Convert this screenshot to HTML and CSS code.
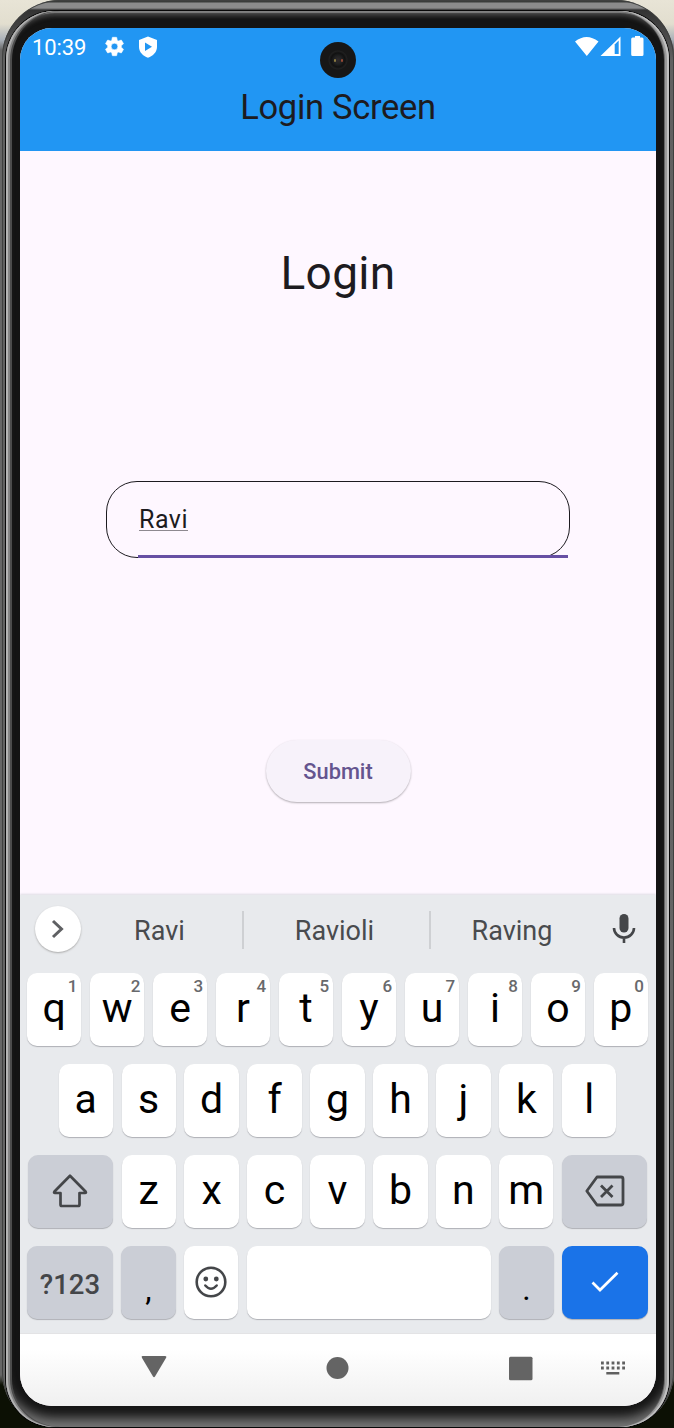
FILE: index.html
```html
<!DOCTYPE html>
<html lang="en">
<head>
<meta charset="utf-8">
<title>Login Screen</title>
<link rel="stylesheet" href="styles.css">
</head>
<body>
<div class="phone">
<div class="bezel">
<span class="camera"><i></i><i></i></span>
<main class="screen">
  <header class="appbar">
    <div class="status">
      <span class="time">10:39</span>
      <svg class="gear" width="23" height="23" viewBox="0 0 24 24"><path fill="#fff" stroke="#fff" stroke-width=".6" d="M19.14 12.94c.04-.3.06-.61.06-.94s-.02-.64-.07-.94l2.03-1.58a.49.49 0 0 0 .12-.61l-1.92-3.32a.49.49 0 0 0-.59-.22l-2.39.96a7 7 0 0 0-1.62-.94l-.36-2.54a.48.48 0 0 0-.48-.41h-3.84a.48.48 0 0 0-.47.41l-.36 2.54c-.59.24-1.13.57-1.62.94l-2.39-.96a.48.48 0 0 0-.59.22L2.74 8.87a.48.48 0 0 0 .12.61l2.03 1.58c-.05.3-.09.63-.09.94s.02.64.07.94l-2.03 1.58a.49.49 0 0 0-.12.61l1.92 3.32c.12.22.37.29.59.22l2.39-.96c.5.38 1.03.7 1.62.94l.36 2.54c.05.24.24.41.48.41h3.84c.24 0 .44-.17.47-.41l.36-2.54a7 7 0 0 0 1.62-.94l2.39.96c.22.08.47 0 .59-.22l1.92-3.32a.48.48 0 0 0-.12-.61zM12 15.5a3.5 3.5 0 1 1 0-7 3.5 3.5 0 0 1 0 7z"/></svg>
      <svg class="shield" width="18" height="22" viewBox="0 0 18 22"><path fill="#fff" fill-rule="evenodd" d="M9 .5 18 4v7c0 5-4 9-9 10.800C4 20 0 16 0 11V4zM6 6.500v8.500L13 10.750z"/></svg>
      <span class="grow"></span>
      <svg class="signals" width="70" height="22" viewBox="0 0 70 22"><path fill="#fff" d="M0 5.500Q11.500-3.500 23.500 5.500L11.800 20ZM25.500 20 45.500 0.500V20Z"/><path fill="#2196f3" d="M39.700 8.500 43.700 4.500V18H39.700Z"/><path fill="#fff" d="M60 0h5v1.500h2a1.500 1.500 0 0 1 1.500 1.500v15.500a1.500 1.500 0 0 1-1.500 1.500H57.700a1.500 1.500 0 0 1-1.500-1.500V3a1.500 1.500 0 0 1 1.500-1.500H60z"/></svg>
    </div>
    <h1 class="title">Login Screen</h1>
  </header>
  <section class="content">
    <h2 class="heading">Login</h2>
    <div class="field"><span class="value">Ravi</span></div>
    <button class="submit">Submit</button>
  </section>
  <section class="keyboard">
    <div class="suggest">
      <span class="expand"><svg width="46" height="46" viewBox="0 0 46 46"><path d="m18 15 8.500 8-8.500 8" fill="none" stroke="#5f6063" stroke-width="3"/></svg></span>
      <span class="word first">Ravi</span>
      <span class="word second">Ravioli</span>
      <span class="word third">Raving</span>
      <svg class="mic" width="24" height="32" viewBox="0 0 24 32"><rect x="7.500" y="1" width="9" height="18.500" rx="4.500" fill="#444649"/><path d="M2 15a9.900 9.500 0 0 0 20 0M12 24.500v5.500" fill="none" stroke="#444649" stroke-width="2.600"/></svg>
    </div>
    <div class="keys">
      <div class="row">
        <span class="key">q<sup>1</sup></span><span class="key">w<sup>2</sup></span><span class="key">e<sup>3</sup></span><span class="key">r<sup>4</sup></span><span class="key">t<sup>5</sup></span><span class="key">y<sup>6</sup></span><span class="key">u<sup>7</sup></span><span class="key">i<sup>8</sup></span><span class="key">o<sup>9</sup></span><span class="key">p<sup>0</sup></span>
      </div>
      <div class="row">
        <span class="key">a</span><span class="key">s</span><span class="key">d</span><span class="key">f</span><span class="key">g</span><span class="key">h</span><span class="key">j</span><span class="key">k</span><span class="key">l</span>
      </div>
      <div class="row">
        <span class="key wide gray"><svg width="36" height="34" viewBox="0 0 36 34"><path d="M18 1.800 33.500 17.500Q34.500 19 33 19H27.500V30.500Q27.500 32 26 32H10Q8.500 32 8.500 30.500V19H3Q1.500 19 2.500 17.500Z" fill="none" stroke="#444649" stroke-width="2.700" stroke-linejoin="round"/></svg></span>
        <span class="key">z</span><span class="key">x</span><span class="key">c</span><span class="key">v</span><span class="key">b</span><span class="key">n</span><span class="key">m</span>
        <span class="key wide gray"><svg width="40" height="34" viewBox="0 0 40 34"><path d="M12 3H36Q38 3 38 5V29Q38 31 36 31H12L1.800 17Z M16 11.500 27.500 23M27.500 11.500 16 23" fill="none" stroke="#444649" stroke-width="2.800" stroke-linejoin="round"/></svg></span>
      </div>
      <div class="row">
        <span class="key wide gray sym">?123</span>
        <span class="key gray punct">,</span>
        <span class="key"><svg width="32" height="32" viewBox="0 0 32 32"><circle cx="16" cy="16" r="14.300" fill="none" stroke="#444649" stroke-width="2.600"/><circle cx="10.800" cy="13" r="2.400" fill="#444649"/><circle cx="21.300" cy="13" r="2.400" fill="#444649"/><path d="M10.300 19.500q5.700 6.500 11.400 0" fill="none" stroke="#444649" stroke-width="2.500" stroke-linecap="round"/></svg></span>
        <span class="key space"></span>
        <span class="key gray punct">.</span>
        <span class="key wide blue"><svg width="28" height="22" viewBox="0 0 28 22"><path d="m1.500 11.500 7.500 7.500L26.500 1.800" fill="none" stroke="#fff" stroke-width="2.700"/></svg></span>
      </div>
    </div>
  </section>
  <nav class="nav">
    <svg width="636" height="73" viewBox="0 1.500 636 73"><g fill="#646464"><path d="M122.500 23.500H145Q147 23.500 146 25.500L135 44Q134 45.500 133 44L122 25.500Q121 23.500 122.500 23.500Z"/><circle cx="317.500" cy="35.500" r="11"/><rect x="489" y="24.300" width="23.500" height="23.500" rx="1.500"/></g><path d="M581 30.500h24.500M581 35.500h24.500" stroke="#606060" stroke-width="2.800" stroke-dasharray="2.800 2.500"/><path d="M586.300 40.800h13" stroke="#606060" stroke-width="2.600"/></svg>
  </nav>
</main>
</div>
</div>
</body>
</html>
```
FILE: styles.css
```css
* { box-sizing: border-box; }
body {
  margin: 0;
  width: 674px;
  height: 1428px;
  overflow: hidden;
  font-family: Roboto, sans-serif;
  background: linear-gradient(#e8e4d6 0, #e2decf 24px, #a9b0b8 40px, #666 50px, #666 1375px, #0c1004 1385px);
}
.phone {
  width: 672px;
  height: 1428px;
  margin-left: 2px;
  padding: 11px 5px 1px 4px;
  border-radius: 58px 58px 56px 56px;
  background: linear-gradient(#3a3c3a 0, #3a3c3a 2px, #8b8b8b 3px, #8b8b8b 8px, #333 10px, #606060 60px, #666 100%);
  box-shadow: inset 0 0 0 1px #3f403f;
}
.bezel {
  position: relative;
  height: 1416px;
  padding: 17px 11px 21px 14px;
  border-radius: 49px 49px 48px 48px;
  background: #141414;
  box-shadow:
    0 0 0 1px #080808,
    inset 2px 0 #b4b4b4,
    inset -2px 0 #c2c2c2,
    inset 4px 0 #858585,
    inset -4px 0 #9b9b9b,
    inset 6px 0 #4c4c4c,
    inset -5px 0 #666,
    inset 0 2px 1px #808080,
    inset 0 5px 4px #444,
    inset 0 -13px 12px -4px #777;
}
.camera {
  position: absolute;
  left: 314px;
  top: 31px;
  z-index: 2;
  width: 36px;
  height: 36px;
  border-radius: 50%;
  background: radial-gradient(circle, #302a2b 0, #202122 4px, #111 7px, #202020 9px, #171717 10px);
  display: flex;
  align-items: center;
  justify-content: center;
  gap: 5px;
}
.camera i { width: 2px; height: 3px; border-radius: 1px; background: #8c7d42; }
.camera i + i { background: #974a36; }
.screen {
  width: 636px;
  height: 1378px;
  border-radius: 32px;
  overflow: hidden;
  background: #fef7ff;
  display: flex;
  flex-direction: column;
}
.appbar { height: 123px; background: #2196f3; }
.status { height: 36px; padding: 0 11px 0 12px; display: flex; align-items: center; }
.time { color: #fff; font-size: 22px; line-height: 36px; padding-top: 3px; width: 56px; letter-spacing: -.1px; }
.gear { margin: 1px 0 0 15px; }
.shield { margin: 1px 0 0 14px; width: 18px; }
.signals { margin-top: 2px; }
.shield { margin-left: 13px; }
.grow { flex: 1; }
.title { margin: 22px 0 0; text-align: center; font-size: 34.500px; line-height: 42px; font-weight: 400; letter-spacing: -.3px; color: #1d1b20; }
.content { height: 744px; display: flex; flex-direction: column; align-items: center; }
.heading { margin: 92px 0 0; font-size: 46px; line-height: 60px; font-weight: 400; color: #1d1b20; letter-spacing: .3px; }
.field {
  position: relative;
  margin: 177.500px 0 0;
  width: 464px;
  height: 77px;
  border: 1.500px solid #1d1b20;
  border-radius: 31px;
  padding: 22.500px 32px;
}
.field::after {
  content: "";
  position: absolute;
  left: 31px;
  right: 1px;
  bottom: -1px;
  height: 3px;
  background: #6750a4;
}
.value { display: inline-block; height: 27px; border-bottom: 1px solid #8e8990; font-size: 25px; line-height: 31px; letter-spacing: .5px; color: #1d1b20; }
.submit {
  margin: 182px 0 0;
  width: 145px;
  height: 62px;
  border: 0;
  border-radius: 31px;
  background: #f7f2fa;
  box-shadow: 0 1px 2px rgba(0,0,0,.3);
  color: #65558f;
  font: 500 21.800px/62px Roboto, sans-serif;
}
.keyboard { height: 438px; background: #e8eaed; box-shadow: 0 -1px 2px #dedce3; }
.suggest { height: 77.500px; padding: 11px 18px 0 15px; display: flex; align-items: flex-start; }
.expand { width: 46px; height: 46px; border-radius: 50%; background: #fff; box-shadow: 0 1px 2px #aaa; }
.word { height: 38px; margin-top: 5px; line-height: 40px; font-size: 27px; color: #494b4e; text-align: center; flex: none; }
.first { width: 156px; margin-left: 5px; padding-right: 9px; }
.second { width: 187px; padding-right: 4px; }
.third { width: 164px; }
.second, .third { border-left: 2px solid #ced0d3; }
.mic { margin: 7px 0 0 19px; flex: none; }
.keys { display: flex; flex-direction: column; gap: 18px; padding: 0 8px 0 7px; }
.row { display: flex; justify-content: center; gap: 8.700px; height: 73px; }
.key {
  position: relative;
  width: 54.270px;
  flex: none;
  border-radius: 10px;
  background: #fff;
  box-shadow: 0 1px 1px #aeb0b5;
  text-align: center;
  font-size: 41px;
  line-height: 71px;
  color: #000;
}
.key svg { position: absolute; inset: 0; margin: auto; }
.key sup { position: absolute; right: 4px; top: 4px; font-size: 17px; line-height: 18px; font-weight: 500; color: #68696c; }
.wide { width: 85.300px; }
.gray { background: #cbced6; }
.blue { background: #1a73e8; }
.space { width: 243.600px; }
.sym { font-size: 27.500px; line-height: 77px; font-weight: 500; color: #444649; }
.punct { font-size: 32px; line-height: 87px; }
.nav { height: 73px; background: linear-gradient(#fff 20%, #f0f0f0); border-top: 1px solid #e3e3e5; }
.nav svg { display: block; }
```
